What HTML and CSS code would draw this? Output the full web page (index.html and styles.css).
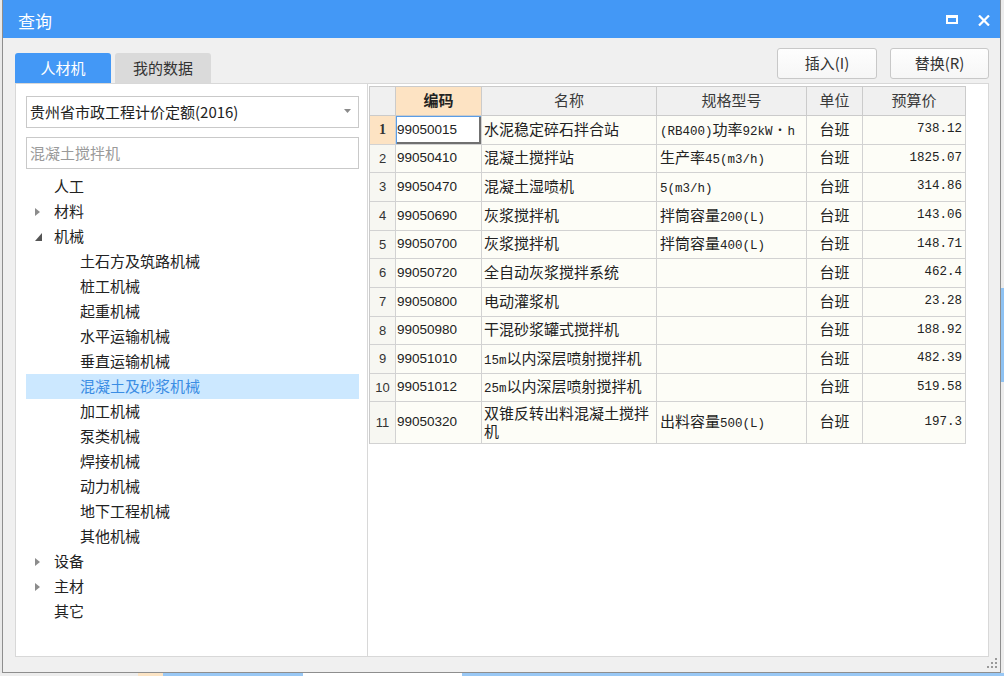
FILE: index.html
```html
<!DOCTYPE html>
<html lang="zh-CN">
<head>
<meta charset="utf-8">
<title>查询</title>
<link rel="stylesheet" href="styles.css">
</head>
<body>
<div class="desktop">
  <div class="top">
    <div class="window">
      <div class="titlebar">
        <span class="title">查询</span>
        <div class="winbtns">
          <svg class="max" width="12" height="9" viewBox="0 0 12 9"><path d="M0 0H12V9H0Z M2 3V7H10V3Z" fill="#fff" fill-rule="evenodd"/></svg>
          <svg class="close" width="12" height="11" viewBox="0 0 12 11"><path d="M1 0.5L11 10.5M11 0.5L1 10.5" stroke="#fff" stroke-width="2.2" fill="none"/></svg>
        </div>
      </div>
      <div class="wbody">
        <div class="toolbar">
          <div class="tabs">
            <div class="tab active">人材机</div>
            <div class="tab">我的数据</div>
          </div>
          <div class="actions">
            <button class="btn b1">插入(I)</button>
            <button class="btn b2">替换(R)</button>
          </div>
        </div>
        <div class="panel">
          <div class="left">
            <div class="combo"><span class="combo-text">贵州省市政工程计价定额(2016)</span><svg class="caret" width="7" height="4" viewBox="0 0 7 4"><path d="M0 0H7L3.5 4Z" fill="#8a8a8a"/></svg></div>
            <div class="search">混凝土搅拌机</div>
            <ul class="tree">
              <li class="l1"><span class="exp"></span>人工</li>
              <li class="l1"><span class="exp"><svg width="5" height="8" viewBox="0 0 5 8"><path d="M0 0L5 4L0 8Z" fill="#8c8c8c"/></svg></span>材料</li>
              <li class="l1"><span class="exp"><svg width="7" height="8" viewBox="0 0 7 8"><path d="M7 0V8H0Z" fill="#555"/></svg></span>机械</li>
              <li class="l2">土石方及筑路机械</li>
              <li class="l2">桩工机械</li>
              <li class="l2">起重机械</li>
              <li class="l2">水平运输机械</li>
              <li class="l2">垂直运输机械</li>
              <li class="l2 sel">混凝土及砂浆机械</li>
              <li class="l2">加工机械</li>
              <li class="l2">泵类机械</li>
              <li class="l2">焊接机械</li>
              <li class="l2">动力机械</li>
              <li class="l2">地下工程机械</li>
              <li class="l2">其他机械</li>
              <li class="l1"><span class="exp"><svg width="5" height="8" viewBox="0 0 5 8"><path d="M0 0L5 4L0 8Z" fill="#8c8c8c"/></svg></span>设备</li>
              <li class="l1"><span class="exp"><svg width="5" height="8" viewBox="0 0 5 8"><path d="M0 0L5 4L0 8Z" fill="#8c8c8c"/></svg></span>主材</li>
              <li class="l1"><span class="exp"></span>其它</li>
            </ul>
          </div>
          <div class="right">
            <div class="grid">
              <div class="c h"></div>
              <div class="c h k">编码</div>
              <div class="c h">名称</div>
              <div class="c h">规格型号</div>
              <div class="c h">单位</div>
              <div class="c h">预算价</div>

              <div class="c n cur">1</div>
              <div class="c code focus">99050015</div>
              <div class="c name">水泥稳定碎石拌合站</div>
              <div class="c spec"><span><span class="m">(RB400)</span>功率<span class="m">92kW</span><span class="dot">・</span><span class="m">h</span></span></div>
              <div class="c unit">台班</div>
              <div class="c price">738.12</div>

              <div class="c n">2</div>
              <div class="c code">99050410</div>
              <div class="c name">混凝土搅拌站</div>
              <div class="c spec"><span>生产率<span class="m">45(m3/h)</span></span></div>
              <div class="c unit">台班</div>
              <div class="c price">1825.07</div>

              <div class="c n">3</div>
              <div class="c code">99050470</div>
              <div class="c name">混凝土湿喷机</div>
              <div class="c spec"><span><span class="m">5(m3/h)</span></span></div>
              <div class="c unit">台班</div>
              <div class="c price">314.86</div>

              <div class="c n">4</div>
              <div class="c code">99050690</div>
              <div class="c name">灰浆搅拌机</div>
              <div class="c spec"><span>拌筒容量<span class="m">200(L)</span></span></div>
              <div class="c unit">台班</div>
              <div class="c price">143.06</div>

              <div class="c n">5</div>
              <div class="c code">99050700</div>
              <div class="c name">灰浆搅拌机</div>
              <div class="c spec"><span>拌筒容量<span class="m">400(L)</span></span></div>
              <div class="c unit">台班</div>
              <div class="c price">148.71</div>

              <div class="c n">6</div>
              <div class="c code">99050720</div>
              <div class="c name">全自动灰浆搅拌系统</div>
              <div class="c spec"></div>
              <div class="c unit">台班</div>
              <div class="c price">462.4</div>

              <div class="c n">7</div>
              <div class="c code">99050800</div>
              <div class="c name">电动灌浆机</div>
              <div class="c spec"></div>
              <div class="c unit">台班</div>
              <div class="c price">23.28</div>

              <div class="c n">8</div>
              <div class="c code">99050980</div>
              <div class="c name">干混砂浆罐式搅拌机</div>
              <div class="c spec"></div>
              <div class="c unit">台班</div>
              <div class="c price">188.92</div>

              <div class="c n">9</div>
              <div class="c code">99051010</div>
              <div class="c name"><span><span class="m">15m</span>以内深层喷射搅拌机</span></div>
              <div class="c spec"></div>
              <div class="c unit">台班</div>
              <div class="c price">482.39</div>

              <div class="c n">10</div>
              <div class="c code">99051012</div>
              <div class="c name"><span><span class="m">25m</span>以内深层喷射搅拌机</span></div>
              <div class="c spec"></div>
              <div class="c unit">台班</div>
              <div class="c price">519.58</div>

              <div class="c n">11</div>
              <div class="c code">99050320</div>
              <div class="c name wrap">双锥反转出料混凝土搅拌机</div>
              <div class="c spec"><span>出料容量<span class="m">500(L)</span></span></div>
              <div class="c unit">台班</div>
              <div class="c price">197.3</div>
            </div>
          </div>
        </div>
      </div>
      <svg class="grip" width="10" height="10" viewBox="0 0 10 10"><g fill="#9a9a9a"><rect x="8" y="0" width="2" height="2"/><rect x="4" y="4" width="2" height="2"/><rect x="8" y="4" width="2" height="2"/><rect x="0" y="8" width="2" height="2"/><rect x="4" y="8" width="2" height="2"/><rect x="8" y="8" width="2" height="2"/></g></svg>
    </div>
    <div class="side"></div>
  </div>
  <div class="bottom"></div>
</div>
</body>
</html>
```
FILE: styles.css
```css
* { box-sizing: border-box; margin: 0; padding: 0; }
html, body { width: 1004px; height: 676px; overflow: hidden; }
body {
  font-family: "Noto Sans CJK SC", "Liberation Sans", sans-serif;
  background: #e9e9e9;
  color: #222;
}
.desktop { display: flex; flex-direction: column; width: 1004px; height: 676px; }
.top { display: flex; height: 673px; padding-left: 2px; }
.window {
  position: relative;
  width: 999px;
  height: 673px;
  border: 1px solid #8e8e8e;
  border-top: none;
  display: flex;
  flex-direction: column;
  background: #f0f0f0;
}
.side {
  width: 3px;
  height: 673px;
  background: linear-gradient(#ececec 0, #ececec 288px, #8ec2f3 288px, #8ec2f3 382px, #ececec 382px);
}
.bottom {
  height: 3px;
  background: linear-gradient(to right, #ededed 0, #ededed 138px, #fce4c4 138px, #fce4c4 163px, #99c8f5 163px, #99c8f5 303px, #ffffff 303px, #ffffff 462px, #99c8f5 462px);
}

/* title bar */
.titlebar {
  height: 38px;
  background: #4398f6;
  display: flex;
  align-items: center;
  justify-content: space-between;
  padding: 3px 10px 0 15px;
  color: #fff;
}
.title { font-size: 17px; line-height: 20px; }
.winbtns { display: flex; align-items: center; gap: 20px; margin-top: -2px; }
.winbtns .close { margin-top: 1px; }

/* body */
.wbody {
  flex: 1;
  display: flex;
  flex-direction: column;
  padding: 10px 11px 15px 12px;
}
.toolbar { height: 35px; display: flex; justify-content: space-between; }
.tabs { display: flex; gap: 4px; align-self: flex-end; }
.tab {
  width: 96px;
  height: 30px;
  border-radius: 3px 3px 0 0;
  background: #dadada;
  color: #333;
  font-size: 15px;
  line-height: 29px;
  text-align: center;
}
.tab.active { background: #4398f6; color: #fff; }
.actions { display: flex; gap: 13px; align-items: flex-start; }
.btn {
  height: 31px;
  border: 1px solid #c8c8c8;
  border-radius: 3px;
  background: linear-gradient(#fefefe, #f6f6f6);
  font-family: "Noto Sans CJK SC", "Liberation Sans", sans-serif;
  font-size: 15px;
  color: #333;
  padding-bottom: 2px;
}
.b1 { width: 100px; }
.b2 { width: 99px; }

.panel {
  height: 574px;
  border: 1px solid #d8d8d8;
  background: #fff;
  display: flex;
}
.left {
  width: 352px;
  border-right: 1px solid #d8d8d8;
  padding: 12px 8px 0 10px;
  display: flex;
  flex-direction: column;
}
.combo {
  height: 32px;
  border: 1px solid #c9c9c9;
  display: flex;
  align-items: center;
  justify-content: space-between;
  padding: 0 7px 2px 3px;
  font-size: 15px;
  color: #222;
}
.search {
  margin-top: 9px;
  height: 32px;
  border: 1px solid #c9c9c9;
  display: flex;
  align-items: center;
  padding: 0 0 2px 3px;
  font-size: 15px;
  color: #9a9a9a;
}
.tree { list-style: none; margin-top: 5px; }
.tree li {
  height: 25px;
  display: flex;
  align-items: center;
  font-size: 15px;
  color: #222;
  padding-bottom: 2px;
}
.tree .l1 { padding-left: 9px; }
.tree .l2 { padding-left: 54px; }
.exp { width: 19px; display: flex; align-items: center; margin-top: 2px; }
.tree .sel { background: #cce8ff; color: #3b8de4; }

.right { flex: 1; padding: 2px 0 0 1px; }
.grid {
  display: grid;
  grid-template-columns: 26px 86px 175px 150px 56px 103px;
  grid-template-rows: 29px 29px 28px 29px 29px 28px 29px 29px 28px 29px 28px 42px;
  width: max-content;
  border-left: 1px solid #cbcbcb;
  border-top: 1px solid #cbcbcb;
}
.c {
  border-right: 1px solid #d2d2d2;
  border-bottom: 1px solid #d2d2d2;
  display: flex;
  align-items: center;
  background: #fdfdf7;
  font-size: 15px;
  white-space: nowrap;
  overflow: hidden;
  color: #222;
  padding-bottom: 4px;
}
.h { background: #f0f0f0; justify-content: center; color: #3a3a3a; border-color: #cbcbcb; }
.h.k { background: #fde3c3; font-weight: bold; color: #222; }
.n {
  justify-content: center;
  background: #f7f7f2;
  font-family: "Liberation Sans", sans-serif;
  font-size: 13px;
  color: #333;
  padding-bottom: 1px;
}
.n.cur { background: #fde3c3; font-family: "Liberation Serif", serif; font-weight: bold; font-size: 14px; }
.code { font-family: "Liberation Sans", sans-serif; font-size: 13.5px; padding-left: 1px; padding-bottom: 2px; }
.focus { background: #fff; box-shadow: inset 1px 1px 0 #5a9de6, inset -2px -2px 0 #707070; }
.name { padding-left: 2px; }
.spec { padding-left: 3px; }
.unit { justify-content: center; }
.price {
  justify-content: flex-end;
  padding-right: 3px;
  font-family: "Liberation Mono", monospace;
  font-size: 12.5px;
  padding-bottom: 2px;
}
.m { font-family: "Liberation Mono", monospace; font-size: 12.5px; }
.dot { display: inline-block; width: 15px; text-align: center; font-size: 12px; }
.wrap { white-space: normal; line-height: 18px; word-break: break-all; padding-bottom: 2px; }

.grip { position: absolute; right: 3px; bottom: 4px; }
```
